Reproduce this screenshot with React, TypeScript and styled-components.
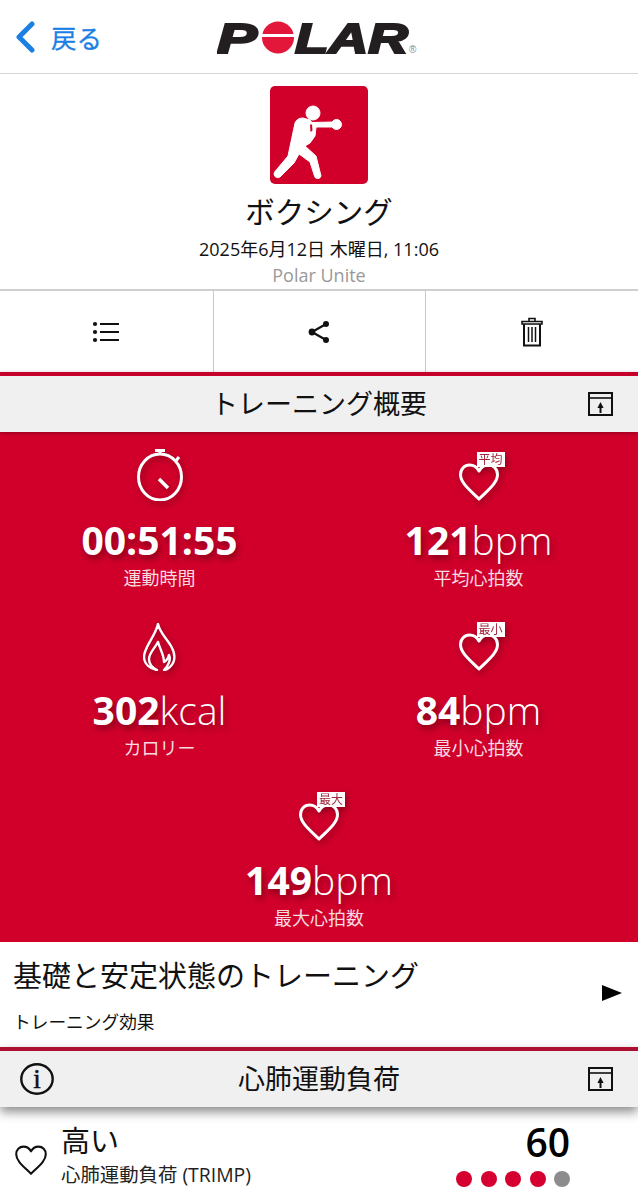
import React from 'react';
import styled, { createGlobalStyle } from 'styled-components';

const RED = '#d0002a';
const FONT = '"Open Sans", "Noto Sans CJK JP", sans-serif';

const GlobalStyle = createGlobalStyle`
  html, body {
    margin: 0;
    padding: 0;
    background: #fff;
  }
  body {
    font-family: ${FONT};
    color: #111;
  }
`;

const Page = styled.div`
  width: 638px;
  height: 1200px;
  overflow: hidden;
  background: #fff;
`;

const Header = styled.header`
  display: grid;
  grid-template-columns: 1fr auto 1fr;
  align-items: center;
  height: 73px;
  border-bottom: 1px solid #d6d6d6;
`;

const BackLink = styled.a`
  display: flex;
  align-items: center;
  gap: 16px;
  padding-left: 15px;
  color: #1b7fe3;
  font-size: 25.5px;
  -webkit-text-stroke: 0.3px #1b7fe3;
`;

const Logo = styled.svg`
  display: block;
  width: 204px;
  height: 50px;
`;

const Activity = styled.section`
  display: flex;
  flex-direction: column;
  align-items: center;
  height: 215px;
  padding-top: 12px;
  box-sizing: border-box;
`;

const SportBadge = styled.svg`
  display: block;
  width: 98px;
  height: 98px;
`;

const SportName = styled.h1`
  margin: 8px 0 0;
  font-size: 29.5px;
  line-height: 40px;
  font-weight: 400;
`;

const DateText = styled.div`
  margin-top: 5px;
  font-size: 18px;
  line-height: 24px;
`;

const DeviceText = styled.div`
  margin-top: 2px;
  font-size: 18px;
  line-height: 24px;
  color: #999;
`;

const Actions = styled.nav`
  display: grid;
  grid-template-columns: repeat(3, 1fr);
  height: 83px;
  border-top: 2px solid #cfcfcf;
  box-sizing: border-box;
`;

const ActionCell = styled.div`
  display: flex;
  align-items: center;
  justify-content: center;
  border-left: 1px solid #c9c9c9;
  &:first-child {
    border-left: none;
  }
`;

const SectionBar = styled.div<{ $heavy?: boolean }>`
  position: relative;
  z-index: 1;
  display: grid;
  grid-template-columns: 74px 1fr 74px;
  align-items: center;
  height: 60px;
  box-sizing: border-box;
  border-top: 4px solid ${(p) => (p.$heavy ? '#ac0f30' : '#c4002b')};
  background: #f0f0f1;
  box-shadow: ${(p) => (p.$heavy ? '0 5px 10px rgba(0, 0, 0, 0.45)' : '0 1px 4px rgba(0, 0, 0, 0.3)')};
`;

const SectionTitle = styled.h2`
  margin: 0;
  text-align: center;
  font-size: 27px;
  line-height: 36px;
  font-weight: 400;
`;

const BarIconLeft = styled.div`
  display: flex;
  padding-left: 20px;
`;

const BarIconRight = styled.div`
  display: flex;
  justify-content: flex-end;
  padding-right: 25px;
`;

const StatsPanel = styled.section`
  display: grid;
  grid-template-columns: 1fr 1fr;
  grid-auto-rows: 170px;
  height: 510px;
  box-sizing: border-box;
  padding-top: 17px;
  background: ${RED};
  color: #fff;
`;

const Stat = styled.div<{ $wide?: boolean }>`
  display: flex;
  flex-direction: column;
  align-items: center;
  grid-column: ${(p) => (p.$wide ? '1 / -1' : 'auto')};
`;

const StatIcon = styled.div`
  position: relative;
  display: flex;
  align-items: flex-end;
  justify-content: center;
  height: 52px;
  filter: drop-shadow(2px 3px 3px rgba(0, 0, 0, 0.3));
`;

const HeartTag = styled.span`
  position: absolute;
  left: 18px;
  top: 3px;
  width: 28px;
  height: 15px;
  background: #fff;
  color: #a3273f;
  font-size: 12px;
  line-height: 15px;
  text-align: center;
`;

const StatValue = styled.div`
  margin-top: 14px;
  font-size: 39px;
  line-height: 50px;
  text-shadow: 2px 4px 6px rgba(0, 0, 0, 0.35);
`;

const Strong = styled.strong`
  font-weight: 700;
`;

const Unit = styled.span`
  font-weight: 300;
  color: #fff;
`;

const StatLabel = styled.div`
  margin-top: 1px;
  font-size: 18px;
  line-height: 24px;
  color: #f6dbe0;
`;

const EffectRow = styled.section`
  display: flex;
  align-items: center;
  justify-content: space-between;
  height: 105px;
  box-sizing: border-box;
  padding: 0 16px 0 13px;
`;

const EffectTitle = styled.div`
  font-size: 29px;
  line-height: 40px;
`;

const EffectCaption = styled.div`
  margin-top: 14px;
  font-size: 17.7px;
  line-height: 24px;
`;

const PlayArrow = styled.svg`
  display: block;
  margin-top: -4px;
`;

const LoadRow = styled.section`
  display: grid;
  grid-template-columns: 46px 1fr auto;
  align-items: start;
  padding: 15px 68px 0 15px;
`;

const LoadHeart = styled.div`
  display: flex;
  margin-top: 23px;
`;

const LoadLevel = styled.div`
  font-size: 29px;
  line-height: 38px;
`;

const LoadCaption = styled.div`
  margin-top: 2px;
  font-size: 19.4px;
  line-height: 26px;
  color: #222;
`;

const LoadScore = styled.div`
  display: flex;
  flex-direction: column;
  align-items: flex-end;
  padding-top: 2px;
`;

const ScoreNumber = styled.div`
  font-size: 39px;
  line-height: 36px;
  font-weight: 600;
  color: #000;
`;

const Dots = styled.div`
  display: flex;
  gap: 8.4px;
  margin-top: 11px;
`;

const Dot = styled.span<{ $on: boolean }>`
  width: 16px;
  height: 16px;
  border-radius: 50%;
  background: ${(p) => (p.$on ? '#d5002f' : '#8c8c8c')};
`;

const ChevronIcon = () => (
  <svg width="20" height="32" viewBox="0 0 20 32" fill="none">
    <path d="M17 3 4 16l13 13" stroke="#1b7fe3" strokeWidth="5" strokeLinecap="round" strokeLinejoin="round" />
  </svg>
);

const PolarLogo = () => (
  <Logo viewBox="0 0 204 50">
    <g fill="#231f20" stroke="#231f20" strokeWidth="2.2" fontFamily='"Liberation Sans", sans-serif' fontWeight="700" fontStyle="italic" fontSize="43">
      <text x="0" y="41" textLength="40" lengthAdjust="spacingAndGlyphs">P</text>
      <text x="78" y="41" textLength="113" lengthAdjust="spacingAndGlyphs">LAR</text>
    </g>
    <circle cx="61" cy="25.500" r="16" fill="#e2173a" />
    <rect x="42" y="22" width="38" height="3" fill="#fff" />
    <text x="192" y="41" fontSize="10" fill="#8a8a8a" fontFamily='"Liberation Sans", sans-serif'>®</text>
  </Logo>
);

const BoxerBadge = () => (
  <SportBadge viewBox="0 0 98 98">
    <rect width="98" height="98" rx="5" fill={RED} />
    <g fill="#fff" stroke="#fff" strokeWidth="1" strokeLinejoin="round">
      <circle cx="43" cy="27" r="7" />
      <circle cx="66.500" cy="38.500" r="5" />
      <path d="M25 37Q27 32 33 32L40 34 42 36.500 63 36V41L46 41 45 50 40 57 35 60 46 70 51 90Q50 93 47.500 92.500 45 92.500 44.500 90L40 76 29 68 24 77 10 91Q7 92.500 5 90.500 3 88 5 85.500L18 70Z" />
    </g>
    <path d="M40 38.500h2l.5 6-2 1.500z" fill={RED} />
  </SportBadge>
);

const ListIcon = () => (
  <svg width="28" height="22" viewBox="0 0 28 22" fill="#111">
    <circle cx="3" cy="3" r="2.1" />
    <circle cx="3" cy="11" r="2.1" />
    <circle cx="3" cy="19" r="2.1" />
    <rect x="8" y="2" width="19" height="2" />
    <rect x="8" y="10" width="19" height="2" />
    <rect x="8" y="18" width="19" height="2" />
  </svg>
);

const ShareIcon = () => (
  <svg width="24" height="24" viewBox="0 0 24 24" fill="#111" stroke="#111">
    <path d="M19 4 5 12l14 8" fill="none" strokeWidth="2.2" />
    <circle cx="19" cy="4" r="3" stroke="none" />
    <circle cx="5" cy="12" r="3.4" stroke="none" />
    <circle cx="19" cy="20" r="3" stroke="none" />
  </svg>
);

const TrashIcon = () => (
  <svg width="22" height="30" viewBox="0 0 22 30" fill="none" stroke="#111" strokeWidth="2">
    <path d="M8 4V1.500h6V4" strokeWidth="1.600" />
    <path d="M1 7V4.500h20V7z" strokeWidth="1.600" />
    <path d="M3 7v21.500h16V7" />
    <path d="M7.500 10v15M11 10v15M14.500 10v15" strokeWidth="1.500" />
  </svg>
);

const CollapseIcon = () => (
  <svg width="25" height="24" viewBox="0 0 25 24" fill="none" stroke="#111" strokeWidth="2">
    <rect x="1" y="1" width="23" height="22" />
    <path d="M1 6h23" strokeWidth="1.600" />
    <path d="M12.500 10 15.600 16H9.400z" fill="#111" stroke="none" />
    <path d="M12.500 15v6" strokeWidth="2" />
  </svg>
);

const InfoIcon = () => (
  <svg width="34" height="32" viewBox="0 0 34 32" fill="none">
    <ellipse cx="17" cy="16" rx="15.700" ry="14.700" stroke="#111" strokeWidth="2.400" />
    <text x="17" y="25" textAnchor="middle" fontSize="27" stroke="#111" strokeWidth="0.5" fill="#111" fontFamily='"Liberation Serif", serif'>i</text>
  </svg>
);

const StopwatchIcon = () => (
  <svg width="50" height="52" viewBox="0 0 50 52" fill="none" stroke="#fff">
    <ellipse cx="25" cy="28" rx="21.500" ry="23" strokeWidth="3" />
    <path d="M20 1.500h10" strokeWidth="3" />
    <path d="M25 2v4" strokeWidth="3" />
    <path d="M40 13l4-5" strokeWidth="3" />
    <path d="M24 30l9 9" strokeWidth="3.500" />
  </svg>
);

const FlameIcon = () => (
  <svg width="34" height="48" viewBox="0 0 34 48" fill="none" stroke="#fff" strokeWidth="2.400" strokeLinejoin="round">
    <path d="M15 1C17 10 24 16 28 23 32 30 33 38 27 44 25 46 23 47 21 47 26 42 28 36 26 32 25 36 23 38 21 39 21 32 17 26 15 19 12 25 6 30 6 36 6 41 10 45 14 47 7 46 1 41 1 34 1 24 12 14 15 1Z" />
  </svg>
);

const HeartIcon = ({ color = '#fff', size = 40, weight = 3 }: { color?: string; size?: number; weight?: number }) => (
  <svg width={size} height={size * 0.95} viewBox="0 0 40 38" fill="none" stroke={color} strokeWidth={weight} strokeLinejoin="round">
    <path d="M20 36C11 27 1.500 20 1.500 11.500 1.500 6 5.500 2 10.500 2c4.300 0 7.600 2.300 9.500 6 1.900-3.700 5.200-6 9.500-6 5 0 9 4 9 9.500C38.500 20 29 27 20 36z" />
  </svg>
);

const stats = [
  { icon: <StopwatchIcon />, value: '00:51:55', label: '運動時間' },
  { icon: <HeartIcon />, tag: '平均', value: '121', unit: 'bpm', label: '平均心拍数' },
  { icon: <FlameIcon />, value: '302', unit: 'kcal', label: 'カロリー' },
  { icon: <HeartIcon />, tag: '最小', value: '84', unit: 'bpm', label: '最小心拍数' },
  { icon: <HeartIcon />, tag: '最大', value: '149', unit: 'bpm', label: '最大心拍数', wide: true },
];

export default function App() {
  return (
    <Page>
      <GlobalStyle />
      <Header>
        <BackLink>
          <ChevronIcon />
          戻る
        </BackLink>
        <PolarLogo />
        <span />
      </Header>

      <Activity>
        <BoxerBadge />
        <SportName>ボクシング</SportName>
        <DateText>2025年6月12日 木曜日, 11:06</DateText>
        <DeviceText>Polar Unite</DeviceText>
      </Activity>

      <Actions>
        <ActionCell><ListIcon /></ActionCell>
        <ActionCell><ShareIcon /></ActionCell>
        <ActionCell><TrashIcon /></ActionCell>
      </Actions>

      <SectionBar>
        <span />
        <SectionTitle>トレーニング概要</SectionTitle>
        <BarIconRight><CollapseIcon /></BarIconRight>
      </SectionBar>

      <StatsPanel>
        {stats.map((s) => (
          <Stat key={s.label} $wide={s.wide}>
            <StatIcon>
              {s.icon}
              {s.tag && <HeartTag>{s.tag}</HeartTag>}
            </StatIcon>
            <StatValue>
              <Strong>{s.value}</Strong>
              {s.unit && <Unit>{s.unit}</Unit>}
            </StatValue>
            <StatLabel>{s.label}</StatLabel>
          </Stat>
        ))}
      </StatsPanel>

      <EffectRow>
        <div>
          <EffectTitle>基礎と安定状態のトレーニング</EffectTitle>
          <EffectCaption>トレーニング効果</EffectCaption>
        </div>
        <PlayArrow width="20" height="16" viewBox="0 0 20 16" fill="#000">
          <path d="M0 0l20 8-20 8z" />
        </PlayArrow>
      </EffectRow>

      <SectionBar $heavy>
        <BarIconLeft><InfoIcon /></BarIconLeft>
        <SectionTitle>心肺運動負荷</SectionTitle>
        <BarIconRight><CollapseIcon /></BarIconRight>
      </SectionBar>

      <LoadRow>
        <LoadHeart>
          <HeartIcon color="#111" size={32} weight={2.6} />
        </LoadHeart>
        <div>
          <LoadLevel>高い</LoadLevel>
          <LoadCaption>心肺運動負荷 (TRIMP)</LoadCaption>
        </div>
        <LoadScore>
          <ScoreNumber>60</ScoreNumber>
          <Dots>
            {[true, true, true, true, false].map((on, i) => (
              <Dot key={i} $on={on} />
            ))}
          </Dots>
        </LoadScore>
      </LoadRow>
    </Page>
  );
}
